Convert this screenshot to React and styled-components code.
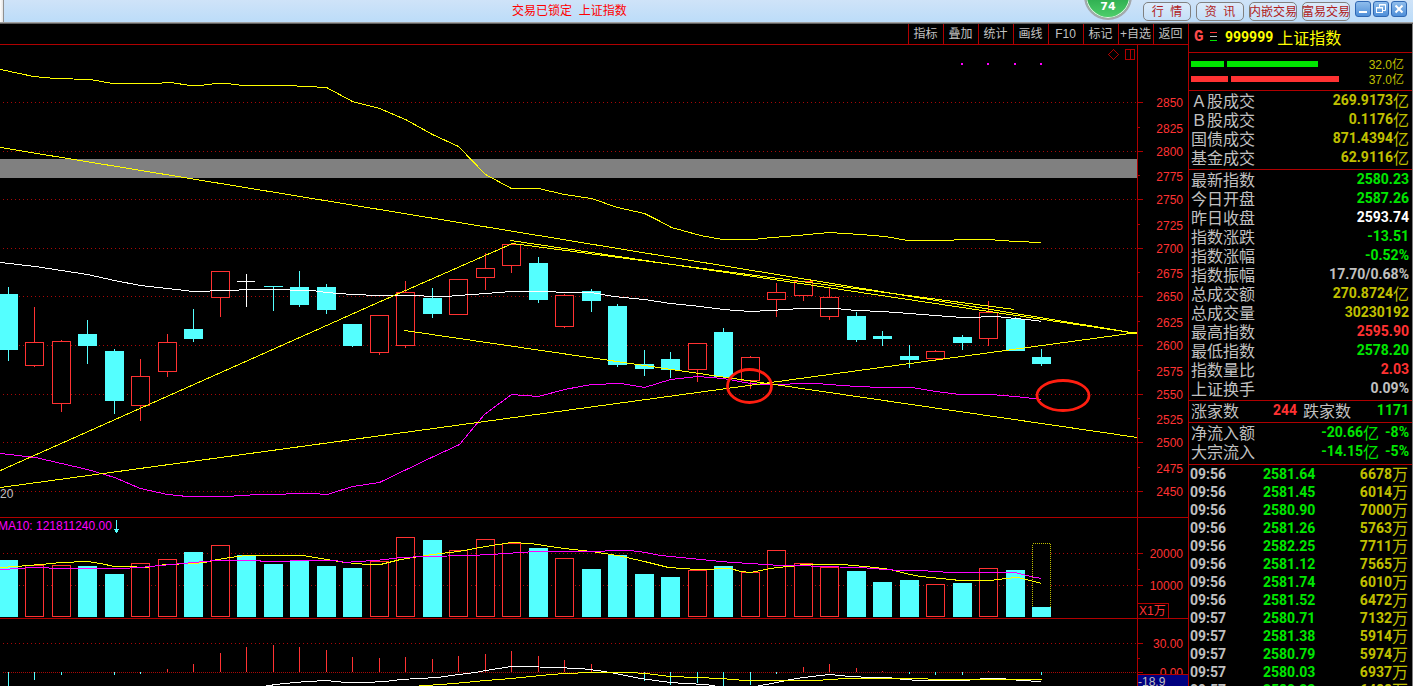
import React from 'react';
import styled, { createGlobalStyle, css } from 'styled-components';

const LINE = '#b00000';
const RED = '#ff3232';
const CYAN = '#54ffff';
const GREEN = '#00e600';
const OLIVE = '#c0c000';
const SILVER = '#c0c0c0';

const Global = createGlobalStyle`
  * { box-sizing: border-box; }
  body {
    margin: 0;
    background: #000;
    font-family: "Liberation Sans", "Noto Sans CJK SC", sans-serif;
    font-size: 12px;
    color: ${SILVER};
  }
  button { font-family: inherit; font-size: 12px; padding: 0; margin: 0; cursor: pointer; }
`;

const Screen = styled.div`
  display: flex;
  flex-direction: column;
  height: 100vh;
  overflow: hidden;
`;

/* ---------- title bar ---------- */
const TitleBar = styled.header`
  position: relative;
  flex: none;
  display: flex;
  height: 24px;
  background: linear-gradient(#cfe3f8, #bbdcf9);
  border-bottom: 1px solid #606060;
  box-shadow: inset 0 -1px #a0a0a0;
`;
const Grip = styled.div`
  width: 4px;
  height: 22px;
  background: linear-gradient(90deg, #fff, #e4e4e4);
  border-right: 1px solid #909090;
`;
const TitleText = styled.h1`
  flex: 1;
  margin: 0;
  padding-left: 508px;
  font-size: 12px;
  font-weight: 400;
  line-height: 23px;
  color: #ff0000;
  white-space: pre;
`;
const TitleActions = styled.nav`
  display: flex;
  gap: 5px;
  padding: 2px 5px 0 0;
`;
const PillButton = styled.button`
  width: 48px;
  height: 19px;
  border: 1px solid #808080;
  border-radius: 5px;
  background: linear-gradient(#dcebfa, #c4dff8);
  color: #b01c1c;
  line-height: 18px;
  white-space: pre;
  display: flex;
  justify-content: center;
`;
const WindowButtons = styled.div`
  display: flex;
  gap: 2px;
  padding: 1px 6px 0 0;
`;
const WindowButton = styled.button`
  width: 16px;
  height: 16px;
  border: 1px solid #2f68b4;
  border-radius: 3px;
  background: linear-gradient(#8fbdec, #4f8fd8);
  display: flex;
  svg { display: block; }
`;
const Ball = styled.div`
  position: absolute;
  right: 281px;
  top: -28px;
  width: 48px;
  height: 48px;
  border: 2px solid #a4a8ac;
  border-radius: 50%;
  background: linear-gradient(#2fae50 55%, #4fd06c);
  box-shadow: inset 0 0 0 1px #e4f4e8;
  color: #fff;
  font: bold 11px/20px "DejaVu Sans", sans-serif;
  text-align: center;
  padding-top: 23px;
`;

/* ---------- layout ---------- */
const Body = styled.div`
  flex: 1;
  min-height: 0;
  display: flex;
  border-right: 1px solid #808080;
`;
const ChartArea = styled.main`
  flex: 1;
  min-width: 0;
  display: flex;
  flex-direction: column;
`;
const Toolbar = styled.nav`
  display: flex;
  justify-content: flex-end;
  height: 21px;
  flex: none;
  border-bottom: 1px solid ${LINE};
`;
const ToolButton = styled.button`
  width: 35px;
  padding-right: 1px;
  border: 0;
  border-left: 1px solid ${LINE};
  background: #000;
  color: ${SILVER};
  line-height: 20px;
  white-space: nowrap;
`;
const Pane = styled.section`
  position: relative;
  display: flex;
  flex: none;
  ${p => !p.$last && css`border-bottom: 1px solid ${LINE};`}
`;
const Plot = styled.svg`
  display: block;
  flex: 1;
  min-width: 0;
  height: ${p => p.$h}px;
`;
const Axis = styled.svg`
  display: block;
  flex: none;
  width: 51px;
  height: ${p => p.$h}px;
  border-left: 1px solid ${LINE};
  font-size: 12px;
`;
const PaneNote = styled.div`
  position: absolute;
  left: ${p => (p.$clip ? -2 : 0)}px;
  ${p => (p.$clip ? 'top: 0' : 'bottom: 15px')};
  display: flex;
  align-items: center;
  gap: 2px;
  line-height: 16px;
  color: ${p => p.$color};
`;
const PaneIcons = styled.svg`
  position: absolute;
  right: 53px;
  top: 3px;
`;

/* ---------- quote panel ---------- */
const Side = styled.aside`
  flex: none;
  width: 224px;
  border-left: 1px solid ${LINE};
  overflow: hidden;
`;
const SideBlock = styled.div`
  border-bottom: 1px solid ${LINE};
  padding: ${p => p.$top || 0}px 3px ${p => p.$pad || 0}px 2px;
`;
const QuoteHead = styled.h2`
  display: flex;
  align-items: center;
  gap: 4px;
  margin: 0;
  height: 28px;
  padding: 0 0 3px 3px;
  color: #ffff00;
  font: 400 16px/24px "Noto Sans CJK SC", sans-serif;
  b { font: bold 14px/24px Roboto, sans-serif; }
  svg { margin-right: 3px; }
`;
const Flag = styled.span`
  color: #ff4b4b;
  font: bold 16px/24px "Liberation Mono", monospace;
  width: 11px;
`;
const FlowRow = styled.div`
  display: flex;
  align-items: center;
  gap: 3px;
  height: 15px;
  padding-right: 5px;
`;
const FlowBar = styled.i`
  height: 6px;
  width: ${p => p.$w}px;
  background: ${p => p.$c};
`;
const FlowValue = styled.span`
  margin-left: auto;
  color: ${OLIVE};
`;
const List = styled.dl`
  margin: 0;
`;
const Row = styled.div`
  display: flex;
  align-items: center;
  height: 19px;
`;
const Name = styled.dt`
  font: 400 16px/19px "Noto Sans CJK SC", sans-serif;
  color: ${SILVER};
  white-space: nowrap;
`;
const Value = styled.dd`
  margin: 0 0 0 auto;
  color: ${p => p.$c};
  font: bold 14px/19px Roboto, "Noto Sans CJK SC", sans-serif;
  white-space: pre;
  display: flex;
`;
const Advance = styled(Value)`
  width: 58px;
  justify-content: flex-end;
  margin: 0 6px 0 0;
`;
const Percent = styled.span`
  width: 30px;
  text-align: right;
`;
const Unit = styled.span`
  font: 400 16px/19px "Noto Sans CJK SC", sans-serif;
`;
const Ticks = styled.table`
  border-collapse: collapse;
  table-layout: fixed;
  width: 100%;
  font: bold 14px/18px Roboto, sans-serif;
  td { padding: 0; height: 18px; line-height: 18px; white-space: nowrap; }
  td:nth-child(1) { width: 74px; padding-left: 1px; color: ${SILVER}; }
  td:nth-child(2) { width: 60px; color: ${GREEN}; }
  td:nth-child(3) { padding-right: 4px; color: ${OLIVE}; text-align: right; }
  span { line-height: 16px; vertical-align: top; }
`;

/* ---------- data: [kind, high, top, bottom, low] of each bar, in plot rows ---------- */
const candles = [
  ['d', 287, 294, 350, 361], ['u', 307, 342, 366, 367], ['u', 340, 341, 404, 412], ['d', 320, 334, 346, 364],
  ['d', 349, 351, 401, 414], ['u', 359, 376, 406, 421], ['u', 334, 342, 372, 377], ['d', 309, 329, 339, 342],
  ['u', 271, 271, 298, 317], ['w', 274, 281, 282, 307], ['d', 286, 286, 287, 311], ['d', 271, 287, 305, 307],
  ['d', 284, 287, 310, 314], ['d', 324, 324, 346, 347], ['u', 315, 315, 353, 355], ['u', 281, 292, 346, 348],
  ['d', 288, 298, 314, 318], ['u', 279, 279, 315, 315], ['u', 253, 268, 278, 290], ['u', 244, 244, 266, 273],
  ['d', 257, 263, 300, 303], ['u', 294, 295, 327, 328], ['d', 289, 291, 301, 312], ['d', 304, 306, 365, 367],
  ['d', 350, 364, 369, 376], ['d', 352, 359, 370, 378], ['u', 343, 343, 370, 382], ['d', 328, 332, 377, 377],
  ['u', 356, 357, 381, 389], ['u', 283, 292, 300, 317], ['u', 281, 281, 296, 301], ['u', 288, 297, 317, 320],
  ['d', 312, 316, 340, 342], ['d', 331, 336, 339, 346], ['d', 345, 356, 360, 368], ['u', 350, 351, 359, 361],
  ['d', 335, 337, 343, 350], ['u', 301, 312, 339, 346], ['d', 317, 319, 351, 351], ['d', 349, 357, 364, 366],
];
const volumes = [560, 565, 565, 566, 574, 563, 559, 552, 545, 555, 564, 561, 566, 568, 561, 537, 540, 550, 539, 543,
  548, 558, 569, 555, 574, 577, 570, 566, 572, 550, 563, 567, 571, 582, 580, 584, 583, 568, 570, 607];
const macd = [686, 680, 675, 0, 675, 674, 669, 664, 653, 647, 645, 647, 650, 657, 658, 657, 659, 656, 654, 651,
  656, 660, 664, 674, 681, 685, 683, 686, 685, 674, 667, 664, 668, 671, 674, 675, 675, 671, 0, 675];
const cx = i => Math.floor(8 + 26.5 * i);

const upper = '0,69 33,76 55,78 90,79 112,83 153,83 170,82 190,85 200,85 215,83 227,83 242,85 286,85 326,87 352,101 379,108 405,119 432,134 458,146 485,174 511,188 538,188 564,194 591,198 617,207 644,213 658,220 671,227 700,235 722,239 755,239 760,238 797,235 829,232 860,234 885,236 907,240 948,240 960,239 988,239 1015,241 1041,242';
const middle = '0,262 35,266 61,270 87,274 114,280 140,285 167,288 193,291 205,291 215,290 232,290 246,289 285,289 293,290 312,290 326,292 352,294 379,295 415,295 432,296 445,296 458,295 485,293 511,291 550,291 560,292 591,292 613,296 644,299 670,303 700,306 723,309 750,311 770,310 800,308 835,308 856,310 882,311 909,313 935,315 962,317 974,317 988,316 995,316 1015,318 1035,320 1041,321';
const lower = '0,453 35,457 61,463 87,469 114,477 140,488 167,494 187,496 227,496 240,495 260,494 312,493 327,494 352,486 379,482 431,457 459,444 484,414 511,394 538,396 564,389 591,384 620,383 644,387 670,379 697,376 723,378 750,383 762,384 785,384 795,383 815,383 829,384 856,386 882,387 912,387 935,391 960,394 990,394 1015,396 1041,399';
const trends = ['0,147 1137,333', '0,470 380,301 512,243', '510,240 1137,333', '512,243 1014,309', '404,330 1137,437', '0,487 1137,332'];
const volFast = '0,567 15,566 40,564 61,562 87,561 100,563 114,566 128,566 145,567 165,564 193,563 205,562 212,560 230,557 246,555 303,555 326,559 345,562 367,564 380,564 400,559 432,554 458,551 485,546 511,542 530,543 550,546 564,548 591,551 617,555 644,561 668,567 697,569 707,569 720,568 730,568 740,571 750,572 760,570 776,567 790,566 803,564 842,564 875,567 890,569 905,573 920,576 960,580 990,580 1005,578 1017,577 1030,580 1041,583';
const volSlow = '0,569 20,568 30,567 47,567 50,568 120,568 140,567 160,565 193,562 215,560 258,560 262,561 285,561 295,560 335,560 345,562 357,561 375,560 385,559 400,557 425,556 470,555 490,554 520,552 535,551 600,551 610,550 630,550 645,552 660,555 680,557 710,560 732,562 750,563 780,565 803,565 817,566 860,567 885,569 900,570 920,570 950,572 1015,572 1030,576 1041,578';
const dif = '263,686 275,684 295,682 307,681 326,680 345,682 365,682 385,681 400,679 437,677 458,674 475,672 485,670 511,666 525,666 580,668 597,670 610,672 640,678 670,682 685,683 705,684 718,686 755,686 776,682 790,679 803,677 829,674 850,676 870,677 888,677 903,679 920,680 965,680 985,678 1000,678 1010,679 1020,680 1041,681';
const dea = '412,686 440,684 465,682 485,680 511,678 540,675 564,673 591,672 630,672 645,673 670,676 697,677 720,678 745,680 815,680 845,678 920,678 935,679 1041,679';

const priceLabels = [2850, 2825, 2800, 2775, 2750, 2725, 2700, 2675, 2650, 2625, 2600, 2575, 2550, 2525, 2500, 2475, 2450];
const priceRows = [102, 128, 151, 176, 199, 225, 248, 273, 296, 322, 345, 371, 394, 419, 442, 468, 491];

const Curve = ({ points, color }) => (
  <polyline points={points} fill="none" stroke={color} transform="translate(0.5 0.5)" />
);
const Grid = ({ y, gap = 3 }) => (
  <line x1="3" x2="1137" y1={y + 0.5} y2={y + 0.5} stroke="#a80808" strokeDasharray={`1 ${gap}`} />
);
const Box = ({ x, top, bottom, up }) =>
  up ? (
    <rect x={x - 8.5} y={top + 0.5} width="18" height={bottom - top - 1} fill="#000" stroke={RED} />
  ) : (
    <rect x={x - 9} y={top} width="19" height={bottom - top} fill={CYAN} />
  );
const Tick = ({ y, minor }) => <rect x="1138" y={y} width={minor ? 2 : 5} height="1" fill={LINE} />;
const AxisText = ({ y, children }) => (
  <text x="1183" y={y + 5} textAnchor="end" fill={RED}>{children}</text>
);

function PricePane() {
  return (
    <Pane>
      <Plot $h={472} viewBox="0 45 1137 472" preserveAspectRatio="none" shapeRendering="crispEdges">
        {priceRows.filter((_, i) => i % 2 === 0).map(y => <Grid key={y} y={y} />)}
        <rect x="0" y="159" width="1137" height="19" fill="#808080" />
        {candles.map(([k, hi, top, bottom, lo], i) => {
          const x = cx(i);
          const color = k === 'u' ? RED : k === 'd' ? CYAN : '#fff';
          return (
            <g key={i}>
              <rect x={x} y={hi} width="1" height={lo - hi} fill={color} />
              {k === 'w' ? <rect x={x - 9} y={top} width="18" height="1" fill="#fff" /> : <Box x={x} top={top} bottom={bottom} up={k === 'u'} />}
            </g>
          );
        })}
        <Curve points={upper} color="#ffff00" />
        <Curve points={middle} color="#fff" />
        <Curve points={lower} color="#ff00ff" />
        {trends.map(t => <Curve key={t} points={t} color="#ffff00" />)}
        {[962, 988, 1015, 1041].map(x => <rect key={x} x={x - 1} y="63" width="2" height="2" fill="#ff00ff" />)}
        <g fill="none" stroke="#ff1e10" strokeWidth="2.8" shapeRendering="auto">
          <ellipse cx="749.5" cy="386" rx="22" ry="16.5" />
          <ellipse cx="1063" cy="395.5" rx="26" ry="15" />
        </g>
      </Plot>
      <Axis $h={472} viewBox="1138 45 50 472" shapeRendering="crispEdges">
        {priceRows.map((y, i) => <Tick key={y} y={i % 2 ? Math.round((priceRows[i - 1] + priceRows[i + 1]) / 2) : y} minor={i % 2 === 1} />)}
        {priceLabels.map((t, i) => <AxisText key={t} y={priceRows[i]}>{t}</AxisText>)}
      </Axis>
      <PaneNote $color={SILVER}>20</PaneNote>
      <PaneIcons width="28" height="14" fill="none" stroke={LINE} shapeRendering="crispEdges">
        <path d="M6.5 1.5L11.5 6.5L6.5 11.5L1.5 6.5Z" />
        <path d="M18.5 1.5H27.5V11.5H18.5ZM23.5 1.5V11.5" />
      </PaneIcons>
    </Pane>
  );
}

function VolumePane() {
  return (
    <Pane>
      <Plot $h={100} viewBox="0 518 1137 100" preserveAspectRatio="none" shapeRendering="crispEdges">
        <Grid y={553} />
        <Grid y={585} />
        <rect x="1032.5" y="543.5" width="18" height="73" fill="#000" stroke={OLIVE} strokeDasharray="1 1" />
        {volumes.map((y, i) => <Box key={i} x={cx(i)} top={y} bottom={617} up={candles[i][0] === 'u'} />)}
        <Curve points={volFast} color="#ffff00" />
        <Curve points={volSlow} color="#ff00ff" />
      </Plot>
      <Axis $h={100} viewBox="1138 518 50 100" shapeRendering="crispEdges">
        <Tick y={553} /><Tick y={569} minor /><Tick y={585} />
        <AxisText y={553}>20000</AxisText>
        <AxisText y={585}>10000</AxisText>
        <path d="M1138 603.5H1168.5V618" fill="none" stroke={LINE} />
        <text x="1139" y="615" fill={RED}>X1万</text>
      </Axis>
      <PaneNote $clip $color="#ff00ff">
        MA10: 121811240.00
        <svg width="5" height="13" fill={CYAN} shapeRendering="crispEdges">
          <path d="M2 0H3V9H5V10H4V12H3V13H2V12H1V10H0V9H2Z" />
        </svg>
      </PaneNote>
    </Pane>
  );
}

function MacdPane() {
  return (
    <Pane $last>
      <Plot $h={67} viewBox="0 619 1137 67" preserveAspectRatio="none" shapeRendering="crispEdges">
        <Grid y={643} />
        <Grid y={672} gap={1} />
        {macd.map((y, i) => y > 0 && (
          <rect key={i} x={cx(i)} y={Math.min(y, 672)} width="1" height={Math.max(Math.abs(y - 672), 1)} fill={y < 672 ? RED : CYAN} />
        ))}
        <Curve points={dif} color="#fff" />
        <Curve points={dea} color="#ffff00" />
      </Plot>
      <Axis $h={67} viewBox="1138 619 50 67" shapeRendering="crispEdges">
        <Tick y={643} /><Tick y={658} minor /><Tick y={672} />
        <AxisText y={643}>30.00</AxisText>
        <AxisText y={672}>0.00</AxisText>
        <rect x="1138" y="674" width="50" height="12" fill="#000080" />
        <rect x="1138" y="674" width="50" height="1" fill={LINE} />
        <text x="1138" y="686" fill={SILVER}>-18.9</text>
      </Axis>
    </Pane>
  );
}

const turnover = [['Ａ股成交', '269.9173', OLIVE, '亿'], ['Ｂ股成交', '0.1176', OLIVE, '亿'], ['国债成交', '871.4394', OLIVE, '亿'], ['基金成交', '62.9116', OLIVE, '亿']];
const quote = [
  ['最新指数', '2580.23', GREEN], ['今日开盘', '2587.26', GREEN], ['昨日收盘', '2593.74', '#fff'],
  ['指数涨跌', '-13.51', GREEN], ['指数涨幅', '-0.52%', GREEN], ['指数振幅', '17.70/0.68%', SILVER],
  ['总成交额', '270.8724', OLIVE, '亿'], ['总成交量', '30230192', OLIVE], ['最高指数', '2595.90', RED],
  ['最低指数', '2578.20', GREEN], ['指数量比', '2.03', RED], ['上证换手', '0.09%', SILVER],
];
const ticks = [
  ['09:56', '2581.64', '6678'], ['09:56', '2581.45', '6014'], ['09:56', '2580.90', '7000'], ['09:56', '2581.26', '5763'],
  ['09:56', '2582.25', '7711'], ['09:56', '2581.12', '7565'], ['09:56', '2581.74', '6010'], ['09:56', '2581.52', '6472'],
  ['09:57', '2580.71', '7132'], ['09:57', '2581.38', '5914'], ['09:57', '2580.79', '5974'], ['09:57', '2580.03', '6937'],
  ['09:57', '2580.23', '6488'],
];

const Quotes = ({ rows }) => (
  <List>
    {rows.map(([name, value, color, unit]) => (
      <Row key={name}>
        <Name>{name}</Name>
        <Value $c={color}>{value}{unit && <Unit>{unit}</Unit>}</Value>
      </Row>
    ))}
  </List>
);

function QuotePanel() {
  return (
    <Side>
      <SideBlock>
        <QuoteHead>
          <Flag>G</Flag>
          <svg width="9" height="11" shapeRendering="crispEdges">
            <rect x="1" y="1" width="7" height="1" fill={RED} />
            <rect x="1" y="5" width="7" height="1" fill={SILVER} />
            <rect x="1" y="9" width="7" height="1" fill={GREEN} />
          </svg>
          <b>999999</b>上证指数
        </QuoteHead>
      </SideBlock>
      <SideBlock $top={3} $pad={4}>
        <FlowRow>
          <FlowBar $w={33} $c={GREEN} /><FlowBar $w={91} $c={GREEN} /><FlowValue>32.0亿</FlowValue>
        </FlowRow>
        <FlowRow>
          <FlowBar $w={37} $c={RED} /><FlowBar $w={108} $c={RED} /><FlowValue>37.0亿</FlowValue>
        </FlowRow>
      </SideBlock>
      <SideBlock $pad={2}><Quotes rows={turnover} /></SideBlock>
      <SideBlock $pad={2}><Quotes rows={quote} /></SideBlock>
      <SideBlock $pad={2}>
        <List>
          <Row>
            <Name>涨家数</Name><Advance $c={RED}>244</Advance>
            <Name>跌家数</Name><Value $c={GREEN}>1171</Value>
          </Row>
        </List>
      </SideBlock>
      <SideBlock $pad={3}>
        <List>
          <Row><Name>净流入额</Name><Value $c={GREEN}>-20.66<Unit>亿</Unit><Percent>-8%</Percent></Value></Row>
          <Row><Name>大宗流入</Name><Value $c={GREEN}>-14.15<Unit>亿</Unit><Percent>-5%</Percent></Value></Row>
        </List>
      </SideBlock>
      <Ticks>
        <tbody>
          {ticks.map(([time, price, vol], i) => (
            <tr key={i}><td>{time}</td><td>{price}</td><td>{vol}<Unit>万</Unit></td></tr>
          ))}
        </tbody>
      </Ticks>
    </Side>
  );
}

export default function App() {
  return (
    <Screen>
      <Global />
      <TitleBar>
        <Grip />
        <TitleText>{'交易已锁定  上证指数'}</TitleText>
        <TitleActions>
          {['行  情', '资  讯', '内嵌交易', '富易交易'].map(t => <PillButton key={t}>{t}</PillButton>)}
        </TitleActions>
        <WindowButtons>
          <WindowButton aria-label="最小化">
            <svg width="14" height="14"><rect x="3" y="9" width="8" height="2" fill="#fff" /></svg>
          </WindowButton>
          <WindowButton aria-label="还原">
            <svg width="14" height="14" fill="none" stroke="#fff">
              <path d="M5.5 5V2.5H11.5V8.5H9" /><path d="M5 3H12" />
              <rect x="2.5" y="5.5" width="6" height="5" /><path d="M2 6H9" />
            </svg>
          </WindowButton>
          <WindowButton aria-label="关闭">
            <svg width="14" height="14" stroke="#fff" strokeWidth="2"><path d="M3.5 3.5L10.5 10.5M10.5 3.5L3.5 10.5" /></svg>
          </WindowButton>
        </WindowButtons>
        <Ball>74</Ball>
      </TitleBar>
      <Body>
        <ChartArea>
          <Toolbar>
            {['指标', '叠加', '统计', '画线', 'F10', '标记', '+自选', '返回'].map(t => <ToolButton key={t}>{t}</ToolButton>)}
          </Toolbar>
          <PricePane />
          <VolumePane />
          <MacdPane />
        </ChartArea>
        <QuotePanel />
      </Body>
    </Screen>
  );
}
